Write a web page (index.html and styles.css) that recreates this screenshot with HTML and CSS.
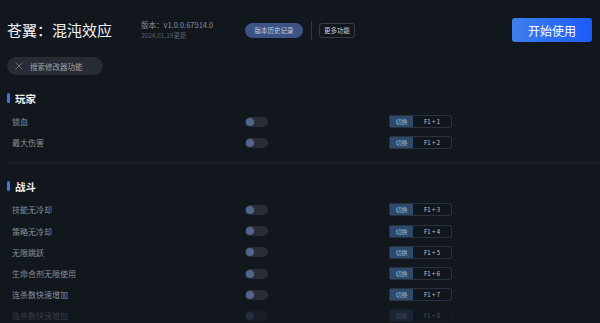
FILE: index.html
```html
<!DOCTYPE html>
<html lang="zh-CN">
<head>
  <meta charset="UTF-8">
  <title>苍翼：混沌效应</title>
  <link rel="stylesheet" href="styles.css">
</head>
<body>
  <div class="header">
    <h1 class="title">苍翼：混沌效应</h1>
    <div class="version">
      <div class="ver-num">版本：v1.0.0.67914.0</div>
      <div class="ver-date">2024.01.19更新</div>
    </div>
    <span class="pill">版本历史记录</span>
    <span class="vline"></span>
    <span class="more">更多功能</span>
    <button class="start">开始使用</button>
  </div>

  <div class="search">
    <svg class="search-x" width="8" height="8" viewBox="0 0 8 8">
      <path d="M0.5 0.5L7.5 7.5M7.5 0.5L0.5 7.5" stroke="#6b717c" stroke-width="1" fill="none"/>
    </svg>
    <span>搜索修改器功能</span>
  </div>

  <div class="section">
    <div class="section-title"><span class="bar"></span>玩家</div>
    <div class="rows">
      <div class="row">
        <span class="label">锁血</span>
        <span class="toggle"><i></i></span>
        <span class="key"><b>切换</b><em>F1 + 1</em></span>
      </div>
      <div class="row">
        <span class="label">最大伤害</span>
        <span class="toggle"><i></i></span>
        <span class="key"><b>切换</b><em>F1 + 2</em></span>
      </div>
    </div>
  </div>

  <div class="divider"></div>

  <div class="section">
    <div class="section-title"><span class="bar"></span>战斗</div>
    <div class="rows">
      <div class="row">
        <span class="label">技能无冷却</span>
        <span class="toggle"><i></i></span>
        <span class="key"><b>切换</b><em>F1 + 3</em></span>
      </div>
      <div class="row">
        <span class="label">策略无冷却</span>
        <span class="toggle"><i></i></span>
        <span class="key"><b>切换</b><em>F1 + 4</em></span>
      </div>
      <div class="row">
        <span class="label">无限跳跃</span>
        <span class="toggle"><i></i></span>
        <span class="key"><b>切换</b><em>F1 + 5</em></span>
      </div>
      <div class="row">
        <span class="label">生命合剂无限使用</span>
        <span class="toggle"><i></i></span>
        <span class="key"><b>切换</b><em>F1 + 6</em></span>
      </div>
      <div class="row">
        <span class="label">连杀数快速增加</span>
        <span class="toggle"><i></i></span>
        <span class="key"><b>切换</b><em>F1 + 7</em></span>
      </div>
      <div class="row faded">
        <span class="label">连杀数快速增加</span>
        <span class="toggle"><i></i></span>
        <span class="key"><b>切换</b><em>F1 + 8</em></span>
      </div>
    </div>
  </div>
</body>
</html>
```

FILE: styles.css
```css
body {
  margin: 0;
  height: 323px;
  overflow: hidden;
  background: #12161d;
  font-family: "Noto Sans CJK SC", "Noto Sans", sans-serif;
  color: #8c919a;
}
.header {
  display: flex;
  align-items: center;
  height: 24px;
  padding: 18px 8px 0 7px;
}
.title {
  margin: 0;
  font-size: 15px;
  font-weight: normal;
  color: #f2f3f5;
  line-height: 20px;
  width: 134px;
}
.version {
  width: 104px;
  line-height: 10px;
  margin-top: -1px;
}
.ver-num {
  font-size: 7.5px;
  color: #8a8f98;
}
.ver-date {
  font-size: 6.5px;
  color: #5a606a;
}
.pill {
  display: inline-flex;
  align-items: center;
  justify-content: center;
  width: 58px;
  height: 15px;
  border-radius: 8px;
  background: #3b5485;
  color: #c3cbdd;
  font-size: 6.5px;
}
.vline {
  width: 1px;
  height: 19px;
  background: #343944;
  margin: 0 7px 0 8px;
}
.more {
  display: inline-flex;
  align-items: center;
  justify-content: center;
  width: 34px;
  height: 13px;
  border: 1px solid #363d49;
  border-radius: 3px;
  color: #c6cad1;
  font-size: 6.5px;
}
.start {
  margin-left: auto;
  width: 80px;
  height: 24px;
  border: none;
  border-radius: 3px;
  background: linear-gradient(90deg, #3d7fe9, #1b5cf8);
  color: #fff;
  font-family: inherit;
  font-size: 12px;
  padding: 0;
}
.search {
  display: flex;
  align-items: center;
  width: 96px;
  height: 18px;
  margin: 15px 0 0 7px;
  border-radius: 9px;
  background: #262b34;
  font-size: 7.5px;
  color: #9ea3ab;
}
.search-x {
  margin: 0 7px 0 8px;
}
.section {
  padding-top: 16px;
}
.section-title {
  display: flex;
  align-items: center;
  height: 14px;
  padding-left: 7px;
  font-size: 10.5px;
  font-weight: bold;
  color: #f1f2f4;
}
.bar {
  width: 3px;
  height: 10px;
  border-radius: 2px;
  background: #3a78e6;
  margin-right: 5px;
}
.rows {
  margin-top: 6px;
}
.row {
  display: flex;
  align-items: center;
  height: 21.2px;
  padding-left: 12px;
}
.label {
  width: 233px;
  font-size: 8px;
}
.toggle {
  display: flex;
  align-items: center;
  width: 23px;
  height: 10px;
  border-radius: 5px;
  background: #292d36;
}
.toggle i {
  width: 8px;
  height: 8px;
  border-radius: 50%;
  background: #52648c;
  margin-left: 1px;
}
.key {
  display: flex;
  margin-left: 121px;
  width: 61px;
  height: 11px;
  border: 1px solid #283241;
  border-radius: 2px;
  font-size: 6px;
  line-height: 11px;
}
.key b {
  width: 23px;
  text-align: center;
  background: #2c4a6d;
  color: #aab6c8;
  font-weight: normal;
}
.key em {
  flex: 1;
  text-align: center;
  font-style: normal;
  color: #c1c5cc;
}
.divider {
  height: 1px;
  margin: 9px 0 0 7px;
  background: #1e232b;
}
.faded {
  opacity: 0.3;
}
```
